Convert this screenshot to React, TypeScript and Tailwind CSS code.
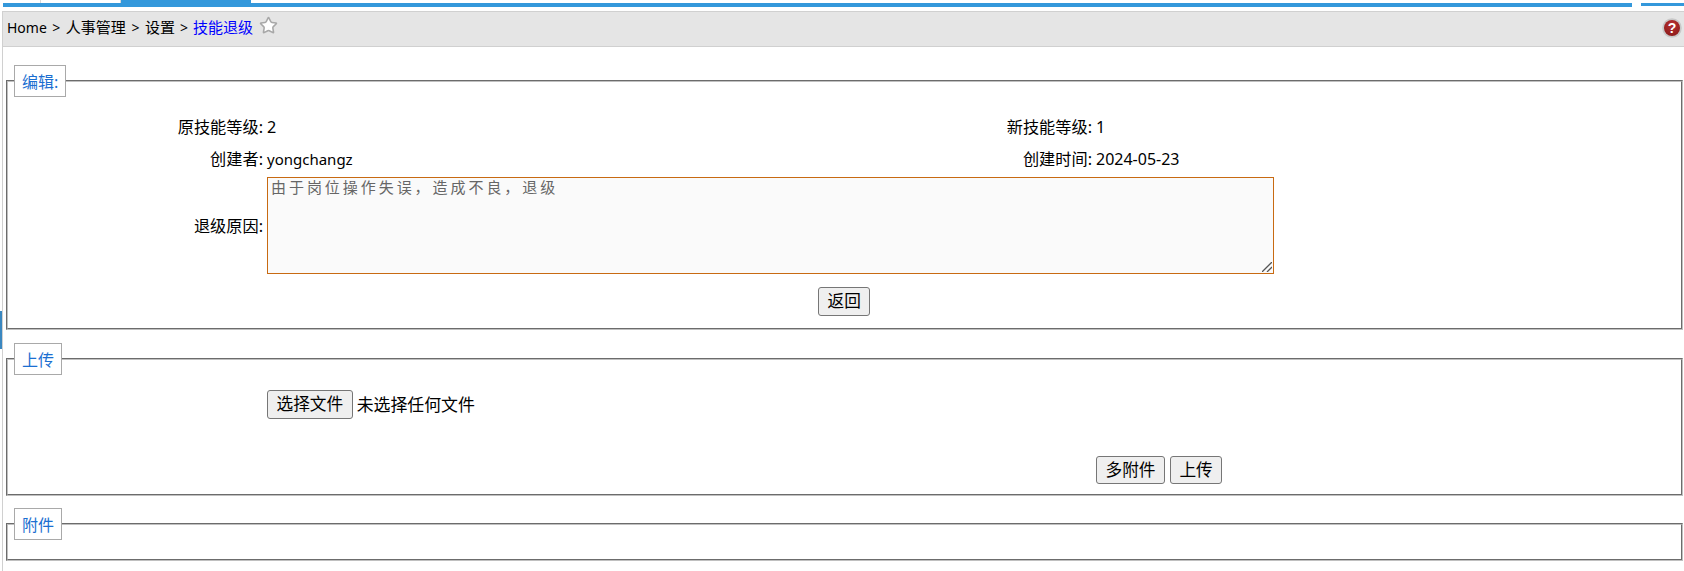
import { Star } from "lucide-react";

const font = "font-['Noto_Sans','Noto_Sans_CJK_SC',sans-serif]";

function Btn({ children, small }: { children: string; small?: boolean }) {
  return (
    <button
      className={`${small ? "h-[28px]" : "h-[29px]"} w-fit px-[8.5px] bg-[#efefef] border border-[#767676] rounded-[3px] text-[16.67px] leading-none text-black`}
    >
      {children}
    </button>
  );
}

function Box({
  title,
  className,
  children,
}: {
  title: string;
  className: string;
  children?: React.ReactNode;
}) {
  return (
    <fieldset className={`ml-[2px] w-[1677px] border-2 [border-style:groove] border-[#c0c0c0] ${className}`}>
      <legend className="ml-[6px] h-[32px] px-[7px] border border-[#a9a9a9] bg-white text-[16px] leading-[33px] text-[#1b6fd1]">
        {title}
      </legend>
      {children}
    </fieldset>
  );
}

export default function App() {
  return (
    <div className={`relative w-[1684px] h-[571px] overflow-hidden bg-white text-black ${font}`}>
      <div className="absolute left-0 top-[311px] w-[2px] h-[38px] bg-[#3a87c0]"></div>

      <div className="flex h-[3px]">
        <div className="w-[40px]"></div>
        <div className="w-[81px] border-x border-[#d8d8d8]"></div>
        <div className="w-[130px] bg-[#3498db]"></div>
      </div>
      <div className="flex h-[4px] mb-[4px] pl-[3px]">
        <div className="w-[1629px] bg-[#3498db]"></div>
        <div className="w-[9px]"></div>
        <div className="flex-1 h-[3px] bg-[#3498db]"></div>
      </div>

      <div className="ml-[2px] pl-[1px] border-l border-[#d0d0d0] h-[564px]">
        <div className="flex items-center h-[36px] pl-[4px] pr-[1px] pb-[3px] bg-[#e5e5e5] border-y border-[#d0d0d0] text-[15px] -ml-[1px]">
          <span className="text-[14px]">Home</span>
          <span className="mx-[5.5px] text-[14px]">&gt;</span>
          <span>人事管理</span>
          <span className="mx-[5.5px] text-[14px]">&gt;</span>
          <span>设置</span>
          <span className="mx-[5px] text-[14px]">&gt;</span>
          <span className="text-[#0000ff]">技能退级</span>
          <Star size={19} strokeWidth={2} className="ml-[6px] -mt-[5px] text-[#a8a8a8] fill-white" />
          <svg viewBox="0 0 20 20" className="ml-auto mr-[1px] w-[20px] h-[20px]">
            <defs>
              <radialGradient id="helpFill" cx="50%" cy="30%" r="70%">
                <stop offset="0%" stopColor="#b93030" />
                <stop offset="100%" stopColor="#8e1c1c" />
              </radialGradient>
            </defs>
            <circle cx="10" cy="10" r="9.8" fill="#c8c8c8" />
            <circle cx="10" cy="10" r="8" fill="url(#helpFill)" />
            <text x="10" y="15" textAnchor="middle" fontSize="14" fontWeight="700" fill="#fff" fontFamily="Liberation Sans">?</text>
          </svg>
        </div>

        <Box title="编辑:" className="mt-[18px] h-[265px]">
          <div className="text-[16.2px] leading-[24px]">
            <div className="grid grid-cols-[255px_825px_1fr] gap-x-[4px] mt-[14px] pb-[2px] items-center h-[34px]">
              <div className="text-right">原技能等级:</div>
              <div className="flex justify-between">
                <span>2</span>
                <span>新技能等级:</span>
              </div>
              <div>1</div>
            </div>
            <div className="grid grid-cols-[255px_825px_1fr] gap-x-[4px] pb-[2px] items-center h-[30px] mb-[2px]">
              <div className="text-right">创建者:</div>
              <div className="flex justify-between">
                <span className="text-[15px]">yongchangz</span>
                <span>创建时间:</span>
              </div>
              <div className="text-[16px]">2024-05-23</div>
            </div>
            <div className="grid grid-cols-[255px_1fr] gap-x-[4px] items-center">
              <div className="text-right">退级原因:</div>
              <div className="relative w-[1007px] h-[97px]">
                <textarea
                  readOnly
                  value="由于岗位操作失误，造成不良，退级"
                  className="block w-full h-full px-[3px] py-0 bg-[#fafafa] border border-[#c86a12] outline-none text-[#666] text-[15px] leading-[18px] tracking-[2.95px] font-['Noto_Sans_CJK_SC',sans-serif] resize-none"
                />
                <svg viewBox="0 0 10 10" className="absolute right-[2px] bottom-[2px] w-[10px] h-[10px]">
                  <path d="M0 10L10 0M5 10L10 5" stroke="#555" strokeWidth="1.3" fill="none" />
                </svg>
              </div>
            </div>
          </div>
          <div className="mt-[13px] ml-[810px]">
            <Btn>返回</Btn>
          </div>
        </Box>

        <Box title="上传" className="mt-[13px] h-[153px]">
          <div className="flex items-center gap-[4px] ml-[259px] mt-[15px] text-[16.9px]">
            <Btn>选择文件</Btn>
            <span>未选择任何文件</span>
          </div>
          <div className="flex gap-[5px] ml-[1088px] mt-[37px]">
            <Btn small>多附件</Btn>
            <Btn small>上传</Btn>
          </div>
        </Box>

        <Box title="附件" className="mt-[12px] h-[53px]"></Box>
      </div>
    </div>
  );
}
